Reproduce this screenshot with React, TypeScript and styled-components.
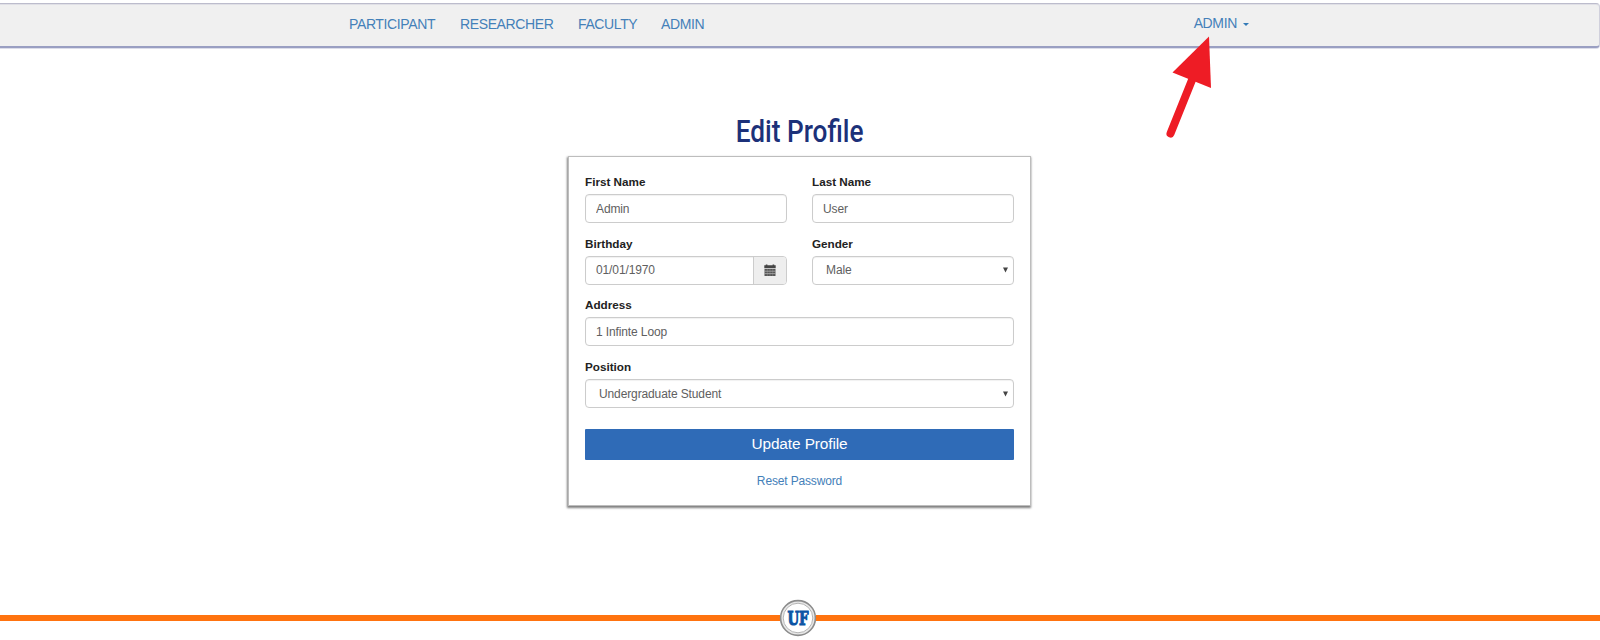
import React from 'react';
import styled, { createGlobalStyle } from 'styled-components';

const GlobalStyle = createGlobalStyle`
  * { box-sizing: border-box; }
  body {
    margin: 0;
    background: #fff;
    font-family: "Liberation Sans", Arial, sans-serif;
    font-size: 12px;
    color: #222;
    overflow: hidden;
  }
`;

const Page = styled.div`
  position: relative;
  height: 640px;
  display: flex;
  flex-direction: column;
  align-items: center;
  padding-top: 3px;
`;

const NavBar = styled.header`
  width: 100%;
  height: 45px;
  flex: none;
  display: flex;
  align-items: flex-start;
  padding: 12px 350px 0 349px;
  background: #f0f0f0;
  border-top: 1px solid #bcbccc;
  border-bottom: 2px solid #9a9fc2;
  border-right: 1px solid #d0d0dc;
  border-radius: 0 4px 4px 0;
  box-shadow: inset 0 1px 0 #e0e0e6, 0 1px 0 #dcddea;
`;

const NavLinks = styled.nav`
  display: flex;
  gap: 25px;
`;

const NavLink = styled.a<{ $width: number }>`
  width: ${(p) => p.$width}px;
  font-size: 14px;
  letter-spacing: -0.38px;
  line-height: 17px;
  white-space: nowrap;
  color: #4480b9;
`;

const UserMenu = styled.a`
  display: flex;
  align-items: center;
  gap: 6px;
  margin: -1px 0 0 auto;
  font-size: 14px;
  letter-spacing: -0.35px;
  line-height: 16px;
  color: #4480b9;
`;

const Caret = styled.span`
  margin-top: 3px;
  border: 3px solid transparent;
  border-top-color: #337ab7;
  border-bottom: 0;
`;

const Title = styled.h1`
  margin: 65px 1px 0 0;
  font: 500 31px/38px Roboto, sans-serif;
  color: #1c3179;
  white-space: nowrap;
  transform: scaleX(0.845);
`;

const Card = styled.form`
  width: 463px;
  height: 350px;
  margin-top: 5px;
  margin-right: 1px;
  padding: 17px 16px 0;
  display: flex;
  flex-direction: column;
  border: 1px solid #bdbdbd;
  box-shadow: -1px 1px 2px 0.5px rgba(0, 0, 0, 0.5);
`;

const Row = styled.div`
  display: grid;
  grid-auto-flow: column;
  grid-auto-columns: minmax(0, 1fr);
  gap: 25px;
  height: 61.7px;
`;

const Field = styled.label`
  display: flex;
  flex-direction: column;
`;

const Label = styled.span`
  font-weight: bold;
  font-size: 11.7px;
  line-height: 16px;
  padding-bottom: 4px;
  color: #222;
`;

const Control = styled.span`
  display: flex;
  align-items: stretch;
  height: 29px;
  border: 1px solid #ccc;
  border-radius: 4px;
  box-shadow: inset 0 1px 1px rgba(0, 0, 0, 0.06);
  overflow: hidden;
`;

const Input = styled.input`
  flex: 1;
  min-width: 0;
  padding: 0 10px;
  border: 0;
  background: transparent;
  font: 12px "Liberation Sans", Arial, sans-serif;
  letter-spacing: -0.12px;
  color: #606060;
`;

const Choice = styled.span`
  flex: 1;
  display: flex;
  align-items: center;
  justify-content: space-between;
  padding: 0 5px 0 13px;
  font-size: 12px;
  letter-spacing: -0.12px;
  color: #606060;
`;

const AddOn = styled.span`
  width: 33px;
  flex: none;
  display: flex;
  align-items: center;
  justify-content: center;
  background: #eee;
  border-left: 1px solid #ccc;
`;

const SubmitButton = styled.button`
  height: 31px;
  flex: none;
  margin-top: 8px;
  padding: 0;
  border: 0;
  border-radius: 1px;
  background: #2f6bb7;
  color: #fff;
  font: 15.4px "Liberation Sans", Arial, sans-serif;
  letter-spacing: -0.1px;
`;

const ResetLink = styled.a`
  margin-top: 13px;
  line-height: 16px;
  letter-spacing: -0.15px;
  text-align: center;
  color: #4480b9;
`;

const Footer = styled.footer`
  width: 100%;
  height: 40px;
  margin: auto 0 2px;
  display: grid;
  grid-template-columns: 780px 36px 1fr;
  align-items: center;
`;

const Rule = styled.span`
  height: 6px;
  background: #ff730f;
`;

const Logo = styled.svg`
  margin: 0 -2px;
`;

const Pointer = styled.svg`
  position: absolute;
  left: 1160px;
  top: 30px;
`;

const DownArrow = () => (
  <svg width="5" height="6" viewBox="0 0 5 6">
    <path d="M0 .5h5L2.5 5.5z" fill="#444" />
  </svg>
);

const CalendarIcon = () => (
  <svg width="12" height="13" viewBox="0 0 12 13">
    <path d="M.3 1.3h11.4v3H.3zM1.8.5h1.6v2H1.8zM8.6.5h1.6v2H8.6z" fill="#444" />
    <path d="M.5 5h11v7H.5z" fill="#555" />
    <path d="M.5 7.2h11M.5 9.6h11" stroke="#bbb" strokeWidth=".7" />
    <path d="M3.3 5v7M6 5v7M8.7 5v7" stroke="#aaa" strokeWidth=".35" />
  </svg>
);

const links = [
  { text: 'PARTICIPANT', width: 86 },
  { text: 'RESEARCHER', width: 93 },
  { text: 'FACULTY', width: 58 },
  { text: 'ADMIN', width: 44 },
];

export default function App() {
  return (
    <>
      <GlobalStyle />
      <Page>
        <NavBar>
          <NavLinks>
            {links.map((l) => (
              <NavLink key={l.text} $width={l.width}>{l.text}</NavLink>
            ))}
          </NavLinks>
          <UserMenu>ADMIN<Caret /></UserMenu>
        </NavBar>
        <Title>Edit Profile</Title>
        <Card>
          <Row>
            <Field>
              <Label>First Name</Label>
              <Control><Input defaultValue="Admin" /></Control>
            </Field>
            <Field>
              <Label>Last Name</Label>
              <Control><Input defaultValue="User" /></Control>
            </Field>
          </Row>
          <Row>
            <Field>
              <Label>Birthday</Label>
              <Control>
                <Input defaultValue="01/01/1970" />
                <AddOn><CalendarIcon /></AddOn>
              </Control>
            </Field>
            <Field>
              <Label>Gender</Label>
              <Control><Choice>Male<DownArrow /></Choice></Control>
            </Field>
          </Row>
          <Row>
            <Field>
              <Label>Address</Label>
              <Control><Input defaultValue="1 Infinte Loop" /></Control>
            </Field>
          </Row>
          <Row>
            <Field>
              <Label>Position</Label>
              <Control><Choice>Undergraduate Student<DownArrow /></Choice></Control>
            </Field>
          </Row>
          <SubmitButton type="button">Update Profile</SubmitButton>
          <ResetLink>Reset Password</ResetLink>
        </Card>
        <Footer>
          <Rule />
          <Logo width="40" height="40" viewBox="0 0 40 40">
            <circle cx="20" cy="20" r="17.4" fill="#e8e8e8" stroke="#8c8c8c" strokeWidth="1.6" />
            <circle cx="20" cy="20" r="14.8" fill="#fff" stroke="#b4b4b4" strokeWidth="1" />
            <text
              x="9.4"
              y="26.8"
              textLength="21.2"
              lengthAdjust="spacingAndGlyphs"
              fontFamily="DejaVu Serif, serif"
              fontWeight="bold"
              fontSize="18.5"
              fill="#0b55a5"
              stroke="#0b55a5"
              strokeWidth="1.1"
            >
              UF
            </text>
          </Logo>
          <Rule />
        </Footer>
        <Pointer width="60" height="110" viewBox="1160 30 60 110">
          <path d="M1170.5 133.5L1192 80" stroke="#ee1c25" strokeWidth="8" strokeLinecap="round" />
          <path d="M1209 36.5L1172.5 72.5L1211 88z" fill="#ee1c25" />
        </Pointer>
      </Page>
    </>
  );
}
